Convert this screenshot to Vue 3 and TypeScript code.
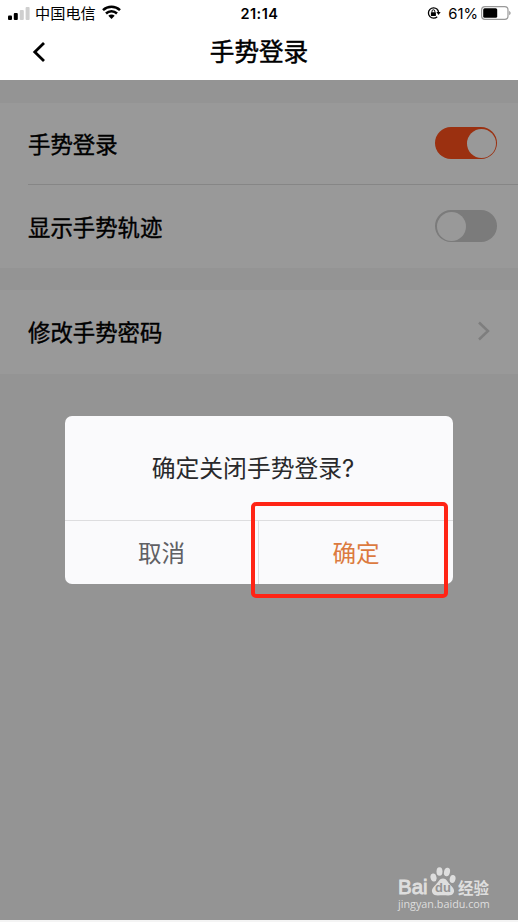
<script setup lang="ts">
import { ref } from 'vue'

interface Setting {
  label: string
  kind: 'switch' | 'link'
  on?: boolean
}

const groups = ref<Setting[][]>([
  [
    { label: '手势登录', kind: 'switch', on: true },
    { label: '显示手势轨迹', kind: 'switch', on: false },
  ],
  [{ label: '修改手势密码', kind: 'link' }],
])
</script>

<template>
  <div class="screen">
    <header class="top">
      <div class="status">
        <div class="side">
          <svg class="signal" width="22" height="13" viewBox="0 0 22 13">
            <rect x="0" y="8.4" width="4" height="4.6" rx="1" fill="#000" />
            <rect x="5.8" y="6" width="4" height="7" rx="1" fill="#000" />
            <rect x="11.8" y="3" width="4" height="10" rx="1" fill="#cfcfcf" />
            <rect x="17.6" y="0" width="4" height="13" rx="1" fill="#cfcfcf" />
          </svg>
          <span class="carrier">中国电信</span>
          <svg class="wifi" width="19" height="14" viewBox="0 0 19 14">
            <g fill="none" stroke="#000" stroke-width="2.5">
              <path d="M1 5.1C5.8.6 13.2.6 18 5.1" />
              <path d="M4 8.5c3.1-3 7.9-3 11 0" />
            </g>
            <path d="M6.3 10.7c1.8-1.7 4.6-1.7 6.4 0L9.5 13.9Z" fill="#000" />
          </svg>
        </div>
        <span class="time">21:14</span>
        <div class="side right">
          <svg class="lock" width="14" height="12" viewBox="0 0 14 12">
            <path d="M10.2 2.2A5.2 5.2 0 1 0 10.2 9.8" fill="none" stroke="#000" stroke-width="1.3" />
            <path d="M10.2 2.2a5.2 5.2 0 0 1 1.3 3" fill="none" stroke="#000" stroke-width="1.3" />
            <path d="M9.4 5h4.3L11.5 8Z" fill="#000" />
            <rect x="3.9" y="5.2" width="5" height="3.7" rx=".5" fill="#000" />
            <path d="M5 5.5V4.2a1.4 1.4 0 0 1 2.8 0v1.3" fill="none" stroke="#000" stroke-width="1" />
          </svg>
          <span class="percent">61%</span>
          <svg class="battery" width="30" height="14" viewBox="0 0 30 14">
            <rect x=".6" y=".6" width="26.4" height="12.8" rx="3.4" fill="none" stroke="#999" stroke-width="1.2" />
            <rect x="2.2" y="2.3" width="14" height="9.4" rx="1.5" fill="#000" />
            <path d="M28.2 4.7q3 2.3 0 4.6Z" fill="#999" />
          </svg>
        </div>
      </div>
      <div class="nav">
        <svg class="back" width="14" height="22" viewBox="0 0 14 22">
          <path d="M12 2 2.8 11l9.2 9" fill="none" stroke="#000" stroke-width="2.8" />
        </svg>
        <h1>手势登录</h1>
      </div>
    </header>

    <main class="content">
      <section v-for="(group, g) in groups" :key="g" class="group">
        <div v-for="item in group" :key="item.label" class="row">
          <span class="label">{{ item.label }}</span>
          <span v-if="item.kind === 'switch'" class="switch" :class="{ on: item.on }"><i /></span>
          <svg v-else class="chevron" width="14" height="20" viewBox="0 0 14 20">
            <path d="M2 1.5 11 10l-9 8.5" fill="none" stroke="#7e7e7e" stroke-width="2.5" />
          </svg>
        </div>
      </section>
    </main>

    <div class="dialog">
      <p class="message">确定关闭手势登录?</p>
      <div class="actions">
        <button class="cancel">取消</button>
        <button class="confirm">确定</button>
      </div>
    </div>
    <div class="highlight" />

    <div class="watermark">
      <div class="brand">
        <span class="bai">Bai</span>
        <span class="paw">
          <svg width="26" height="29" viewBox="0 0 26 29">
            <g fill="#dedede">
              <ellipse cx="3.5" cy="10.5" rx="3" ry="4.1" transform="rotate(-12 3.5 10.5)" />
              <ellipse cx="9.5" cy="4.5" rx="3" ry="4.3" />
              <ellipse cx="17" cy="5" rx="3" ry="4.3" transform="rotate(12 17 5)" />
              <ellipse cx="22.6" cy="12" rx="2.9" ry="4" transform="rotate(12 22.6 12)" />
              <path d="M13 11.5c3.5 0 4.8 3.7 7.2 6.2 3.4 3.4 4.8 5.6 3.3 8.4-1.7 3.4-6.500 2.200-10.500 2.200S4.200 29.500 2.500 26.100C1 23.300 2.300 21 5.700 17.700c2.500-2.500 3.800-6.200 7.300-6.200Z" />
            </g>
          </svg>
          <b>du</b>
        </span>
        <span class="jy">经验</span>
      </div>
      <div class="site">jingyan.baidu.com</div>
    </div>
  </div>
</template>

<style>
body {
  background: #f4f4f4;
}
</style>

<style scoped>
.screen {
  position: relative;
  height: 920px;
  background: #949494;
  color: #000;
  font-family: Inter, 'Noto Sans CJK SC', sans-serif;
}
.top {
  height: 80px;
  background: #fff;
}
.status {
  display: grid;
  grid-template-columns: 1fr auto 1fr;
  align-items: center;
  height: 26px;
  padding: 0 7px 0 8px;
}
.side {
  display: flex;
  align-items: center;
}
.right {
  justify-content: flex-end;
}
.carrier {
  margin-left: 5px;
  padding-top: 1px;
  font-size: 15.2px;
  line-height: 25px;
}
.wifi {
  margin-left: 6px;
  margin-top: -2px;
}
.time {
  font-size: 14.5px;
  font-weight: 600;
  letter-spacing: 0.5px;
}
.percent {
  margin: 1px 3px 0 7px;
  font-size: 14.8px;
}
.nav {
  display: grid;
  grid-template-columns: 60px 1fr 60px;
  align-items: center;
  height: 51px;
}
.back {
  margin-left: 32px;
}
h1 {
  margin: 0;
  font-size: 24.6px;
  line-height: 50px;
  font-weight: 400;
  text-align: center;
  -webkit-text-stroke: 0.5px #000;
}
.content {
  display: flex;
  flex-direction: column;
  gap: 22px;
  padding-top: 23px;
}
.group {
  background: #999;
}
.row {
  display: flex;
  align-items: center;
  justify-content: space-between;
  box-sizing: border-box;
  height: 83px;
  margin-left: 28px;
  padding-right: 21px;
}
.row:first-child:not(:last-child) {
  height: 82px;
  border-bottom: 1px solid #868686;
}
.row:only-child {
  height: 84px;
}
.label {
  padding-top: 2px;
  font-size: 22.4px;
  line-height: 32px;
  -webkit-text-stroke: 0.4px #000;
}
.switch {
  display: flex;
  box-sizing: border-box;
  width: 62px;
  height: 32px;
  margin-top: -1px;
  padding: 1.5px;
  border-radius: 16px;
  background: #7b7b7b;
}
.switch i {
  width: 29px;
  height: 29px;
  border-radius: 50%;
  background: #999;
}
.switch.on {
  justify-content: flex-end;
  background: #9b3010;
}
.chevron {
  margin-right: 6px;
  margin-top: -3px;
}
.dialog {
  position: absolute;
  left: 65px;
  top: 416px;
  display: flex;
  flex-direction: column;
  width: 388px;
  height: 168px;
  border-radius: 7px;
  background: #fafafc;
}
.message {
  box-sizing: border-box;
  margin: 0;
  height: 104px;
  padding: 2px 12px 0 0;
  font-size: 23.8px;
  line-height: 102px;
  text-align: center;
  color: #29292b;
}
.actions {
  display: grid;
  grid-template-columns: 1fr 1fr;
  flex: 1;
  border-top: 1px solid #dddddf;
}
button {
  padding: 0 0 2px;
  border: 0;
  background: none;
  font: 23.6px 'Noto Sans CJK SC', sans-serif;
}
.cancel {
  color: #606064;
  border-right: 1px solid #dddddf;
}
.confirm {
  color: #dc7a40;
}
.highlight {
  position: absolute;
  left: 251px;
  top: 502px;
  box-sizing: border-box;
  width: 197px;
  height: 96px;
  border: 4px solid #ff2415;
  border-radius: 5px;
}
.watermark {
  position: absolute;
  left: 398px;
  top: 867px;
  width: 94px;
  color: #dedede;
}
.brand {
  display: flex;
  align-items: flex-end;
  height: 29px;
}
.bai {
  width: 32px;
  font: 20.5px/18px 'Liberation Sans', sans-serif;
  -webkit-text-stroke: 0.9px #dedede;
}
.paw {
  position: relative;
  height: 29px;
}
.paw b {
  position: absolute;
  left: 5px;
  bottom: 2px;
  font: 700 13px/13px 'Liberation Sans', sans-serif;
  color: #949494;
}
.jy {
  margin-left: 2px;
  font: 700 15.5px/18px 'Noto Sans CJK SC', sans-serif;
}
.site {
  font: 10.8px/15px 'Open Sans', sans-serif;
}
</style>
